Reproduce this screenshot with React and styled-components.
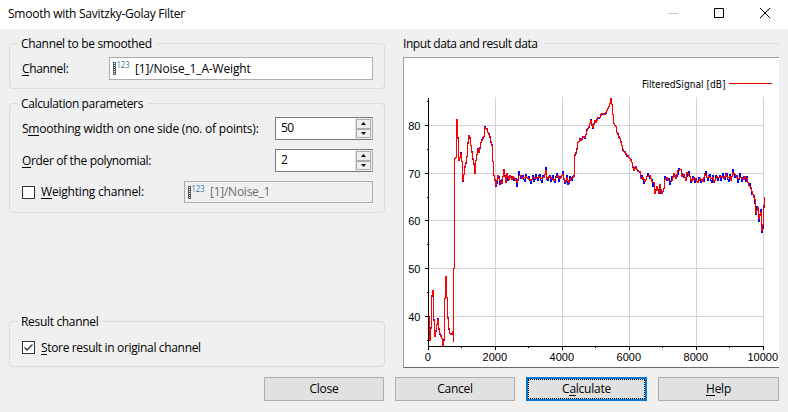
import React from "react";
import styled, { createGlobalStyle, css } from "styled-components";

const GlobalStyle = createGlobalStyle`
  * { box-sizing: border-box; }
  body { margin: 0; background: #f0f0f0; overflow: hidden; }
`;

const Dialog = styled.div`
  width: 788px;
  height: 412px;
  display: flex;
  flex-direction: column;
  background: #f0f0f0;
  color: #000;
  font: 12px/16px "Open Sans", "Noto Sans", sans-serif;
  white-space: nowrap;
`;

const TitleBar = styled.header`
  height: 29px;
  flex: none;
  display: flex;
  align-items: center;
  justify-content: space-between;
  padding: 0 18px 2px 8px;
  background: #fff;
`;

const WindowButtons = styled.div`
  display: flex;
  gap: 36px;
  padding-bottom: 1px;
  svg { display: block; }
`;

/* Run of text; tracking tightens the face to the dialog metrics. */
const Text = styled.span`
  letter-spacing: ${(p) => p.$track ?? -0.25}px;
  u { text-decoration: none; box-shadow: inset 0 -1px 0 #000; display: inline-block; height: 15px; line-height: 16px; }
`;

const Body = styled.main`
  display: grid;
  grid-template-columns: 376px 376px;
  column-gap: 18px;
  padding: 6px 0 0 9px;
  height: 338px;
  flex: none;
`;

const Settings = styled.div`
  display: flex;
  flex-direction: column;
`;

const Group = styled.fieldset`
  height: ${(p) => p.$height}px;
  min-width: 0;
  margin: 0 0 ${(p) => p.$after || 0}px;
  padding: 0 11px 0 12px;
  border: 1px solid #d5dfe8;
  border-radius: 4px;
`;

const Legend = styled.legend`
  height: 17px;
  margin-left: -4px;
  padding: 1px 5px 0 3px;
`;

const Row = styled.div`
  display: flex;
  align-items: center;
  justify-content: space-between;
  height: ${(p) => p.$height || 23}px;
  margin-top: ${(p) => p.$before}px;
`;

const ChannelField = styled.div`
  width: ${(p) => p.$width}px;
  height: ${(p) => p.$height || 23}px;
  display: flex;
  align-items: center;
  gap: 3px;
  padding-left: 3px;
  border: 1px solid #abadb3;
  background: ${(p) => (p.$disabled ? "#f0f0f0" : "#fff")};
  color: ${(p) => (p.$disabled ? "#6d6d6d" : "#000")};
  svg { flex: none; overflow: visible; }
`;

const SpinBox = styled.div`
  width: 98px;
  height: 23px;
  display: flex;
  justify-content: space-between;
  border: 1px solid #abadb3;
  border-color: #7a7a7a #abadb3 #7a7a7a #7a7a7a;
  background: #fff;
  padding-left: 5px;
  line-height: 20px;
`;

const Steppers = styled.div`
  width: 17px;
  display: flex;
  flex-direction: column;
  border: 1px solid #f0f0f0;
  border-left-color: #ddd;
  background: #f0f0f0;
`;

const Stepper = styled.div`
  flex: 1;
  display: flex;
  align-items: center;
  justify-content: center;
  border: 1px solid #adadad;
  background: #f0f0f0;
`;

const CheckLine = styled.div`
  display: flex;
  align-items: center;
  gap: 6px;
`;

const CheckBox = styled.div`
  width: 13px;
  height: 13px;
  border: 1px solid #333;
  background: #fff;
  svg { display: block; }
`;

const Preview = styled.section`
  display: flex;
  flex-direction: column;
`;

const PreviewTitle = styled.div`
  display: flex;
  align-items: center;
  gap: 6px;
  height: 17px;
  padding-top: 1px;
  &::after { content: ""; flex: 1; height: 1px; margin-bottom: 1px; background: #d5dfe8; }
`;

const ChartPanel = styled.div`
  width: 376px;
  height: 311px;
  margin-top: 5px;
  background: #fff;
  border-top: 1px solid #a0a0a0;
  border-left: 1px solid #a0a0a0;
  border-bottom: 1px solid #696969;
  svg { display: block; }
`;

const Footer = styled.footer`
  display: grid;
  grid-template-columns: 120px 120px 121px 121px;
  column-gap: 11px;
  justify-content: end;
  padding: 10px 9px 0 0;
`;

const PushButton = styled.div`
  height: 24px;
  display: flex;
  align-items: center;
  justify-content: center;
  background: #e1e1e1;
  border: 1px solid #adadad;
  padding-bottom: 1px;
  ${(p) => p.$primary && css`
    border: 2px solid #0078d7;
    outline: 1px dotted #000;
    outline-offset: -3px;
  `}
`;

function ChannelIcon() {
  return (
    <svg width="19" height="15" viewBox="0 0 19 15">
      <path d="M0.5 1V14M2.5 1V14" stroke="#555d63" shapeRendering="crispEdges" />
      <path d="M1.5 1V14" stroke="#555d63" strokeDasharray="1 1" shapeRendering="crispEdges" />
      <text x="3.5" y="7" fontSize="8.5" textLength="13" lengthAdjust="spacingAndGlyphs" fill="#1f72a6" fontFamily="Open Sans, sans-serif">123</text>
    </svg>
  );
}

function Spinner({ value }) {
  return (
    <SpinBox>
      <Text $track={-0.6}>{value}</Text>
      <Steppers>
        <Stepper><svg width="5" height="3"><path d="M0 3L2.5 0L5 3Z" /></svg></Stepper>
        <Stepper><svg width="5" height="3"><path d="M0 0L2.5 3L5 0Z" /></svg></Stepper>
      </Steppers>
    </SpinBox>
  );
}

/* Filtered curve as x,y pairs on the plot canvas. */
const filtered = `428,316 429,340 430,328 431,295 432,290 433,320 434,336 436,324 437,319 438,328 439,333 441,338 442,345 443,340 444,298 445,276 446,297 447,318 448,328 449,333 451,334 452,331 453,341 453,268 454,268 454,158 455,157 456,119 457,138 458,160 460,153 461,161 462,180 464,167 466,156 467,143 468,135 469,137 471,152 473,163 474,173 475,160 476,154 477,149 478,152 480,142 482,137 483,136 484,127 486,128 487,132 489,136 491,145 492,161 493,175 495,185 497,175 499,180 501,183 503,169 505,182 506,173 508,179 509,175 511,179 512,176 514,178 516,182 518,175 520,175 522,178 525,176 527,178 530,180 532,177 535,178 538,176 540,178 543,177 545,170 546,178 548,176 551,178 553,180 555,177 557,175 559,178 562,174 563,178 565,182 566,177 568,182 570,178 573,176 574,154 576,149 577,142 579,139 580,140 582,136 584,137 586,130 588,126 590,120 592,127 594,120 595,122 597,117 599,117 601,113 604,114 606,110 608,106 609,103 610,98 611,104 613,123 615,126 616,132 619,138 622,149 624,152 627,156 629,158 631,162 633,170 635,166 637,171 639,171 640,178 642,177 644,181 646,176 649,175 651,181 653,182 654,193 656,186 658,193 659,184 661,193 663,188 664,179 666,177 668,180 671,180 673,173 675,178 677,170 680,169 681,176 683,174 685,180 686,172 689,176 691,181 693,177 697,182 699,178 702,181 704,173 706,177 708,176 710,178 712,177 713,182 716,176 718,177 721,176 723,178 725,174 727,177 729,176 730,180 732,172 734,174 735,175 737,178 740,177 743,179 744,176 746,178 748,185 750,187 752,194 754,199 755,213 757,207 758,218 760,212 761,230 762,224 763,207 764,196`
  .split(" ")
  .map((pair) => pair.split(",").map(Number));

/* Deviation of the unsmoothed input from the filtered curve, per column. */
const jitter = [0, -3, 1, 3, 0, -2, 4, 1, -4, 0, 3, -1, -3, 2, 4, -2, 0];

/* Pixel-stepped trace: one column at a time, then along the row. */
const toSteps = (data, noise = () => 0) =>
  data
    .map(([x, y], i) => {
      if (i === 0) return `M${x + 0.5} ${y + 0.5}`;
      const [px, py] = data[i - 1];
      let d = "";
      for (let c = px + 1; c <= x; c++) {
        const level = Math.round(py + ((y - py) * (c - px)) / (x - px));
        d += `H${c + 0.5}V${Math.min(345, level + noise(c)) + 0.5}`;
      }
      return d || `V${y + 0.5}`;
    })
    .join("");

/* The input is calmer on the steep slopes than on the plateaus. */
const inputNoise = (x) => {
  if ((x > 452 && x < 456) || (x > 606 && x < 616)) return 0;
  const n = jitter[x % jitter.length];
  const calm = x < 495 || (x >= 573 && x < 640);
  return calm ? Math.round(n / 3) : n;
};

const xTicks = [0, 2000, 4000, 6000, 8000, 10000];
const yTicks = [[80, 125.5], [70, 173.5], [60, 220.5], [50, 268.5], [40, 316.5]];

function Chart() {
  return (
    <svg width="375" height="309" viewBox="404 58 375 309" fontFamily="Liberation Sans, sans-serif" fontSize="11">
      <g stroke="#d3d3d3" fill="none" shapeRendering="crispEdges">
        {xTicks.slice(1).map((v, i) => <path key={v} d={`M${495.5 + i * 67} 97V346`} />)}
        {yTicks.map(([v, y]) => <path key={v} d={`M428 ${y}H764`} />)}
      </g>
      <g stroke="#000" fill="none" shapeRendering="crispEdges">
        <path d="M428.5 98V347M428 346.5H764" />
        {xTicks.map((v, i) => <path key={v} d={`M${428.5 + i * 67} 346V350`} />)}
        {[0, 1, 2, 3, 4].map((i) => <path key={i} d={`M${461.5 + i * 67} 346V348`} />)}
        {yTicks.map(([v, y]) => <path key={v} d={`M425 ${y}H429`} />)}
        {[101.5, 149.5, 197.5, 244.5, 292.5, 340.5].map((y) => <path key={y} d={`M427 ${y}H429`} />)}
      </g>
      {xTicks.map((v, i) => <text key={v} x={427.8 + i * 67} y="361" textAnchor="middle">{v}</text>)}
      {yTicks.map(([v, y]) => <text key={v} x="420.5" y={y + 4} textAnchor="end">{v}</text>)}
      <text x="642" y="88" fontFamily="DejaVu Sans Condensed, DejaVu Sans" fontSize="10.5" textLength="83.5" lengthAdjust="spacingAndGlyphs">FilteredSignal [dB]</text>
      <path d="M729 83.5H772" stroke="#e00000" shapeRendering="crispEdges" />
      <g fill="none" shapeRendering="crispEdges">
        <path d={toSteps(filtered, inputNoise)} stroke="#00f" />
        <path d={toSteps(filtered)} stroke="#f00" />
      </g>
    </svg>
  );
}

export default function App() {
  return (
    <>
      <GlobalStyle />
      <Dialog>
        <TitleBar>
          <Text>Smooth with Savitzky-Golay Filter</Text>
          <WindowButtons>
            <svg width="10" height="10"><path d="M0 5.5H10" stroke="#c4c4c4" /></svg>
            <svg width="10" height="10"><path d="M0.5 0.5H9.5V9.5H0.5Z" fill="none" stroke="#000" /></svg>
            <svg width="10" height="10"><path d="M0 0L10 10M10 0L0 10" stroke="#000" /></svg>
          </WindowButtons>
        </TitleBar>
        <Body>
          <Settings>
            <Group $height={54} $after={6}>
              <Legend><Text $track={-0.33}>Channel to be smoothed</Text></Legend>
              <Row $before={5}>
                <Text $track={-0.35}><u>C</u>hannel:</Text>
                <ChannelField $width={264}><ChannelIcon /><Text $track={-0.15}>[1]/Noise_1_A-Weight</Text></ChannelField>
              </Row>
            </Group>
            <Group $height={118} $after={100}>
              <Legend><Text $track={-0.37}>Calculation parameters</Text></Legend>
              <Row $before={5}>
                <Text $track={-0.23}>S<u>m</u>oothing width on one side (no. of points):</Text>
                <Spinner value="50" />
              </Row>
              <Row $before={9}>
                <Text $track={-0.35}><u>O</u>rder of the polynomial:</Text>
                <Spinner value="2" />
              </Row>
              <Row $before={9} $height={22}>
                <CheckLine><CheckBox /><Text $track={-0.2}><u>W</u>eighting channel:</Text></CheckLine>
                <ChannelField $width={189} $height={22} $disabled><ChannelIcon /><Text $track={-0.25}>[1]/Noise_1</Text></ChannelField>
              </Row>
            </Group>
            <Group $height={54}>
              <Legend><Text $track={-0.32}>Result channel</Text></Legend>
              <Row $before={6}>
                <CheckLine>
                  <CheckBox><svg width="11" height="11"><path d="M1.5 5.5L4 8L9.5 2.5" fill="none" stroke="#333" strokeWidth="1.3" /></svg></CheckBox>
                  <Text $track={-0.34}><u>S</u>tore result in original channel</Text>
                </CheckLine>
              </Row>
            </Group>
          </Settings>
          <Preview>
            <PreviewTitle><Text $track={-0.42}>Input data and result data</Text></PreviewTitle>
            <ChartPanel><Chart /></ChartPanel>
          </Preview>
        </Body>
        <Footer>
          <PushButton><Text>Close</Text></PushButton>
          <PushButton><Text>Cancel</Text></PushButton>
          <PushButton $primary><Text>C<u>a</u>lculate</Text></PushButton>
          <PushButton><Text><u>H</u>elp</Text></PushButton>
        </Footer>
      </Dialog>
    </>
  );
}
